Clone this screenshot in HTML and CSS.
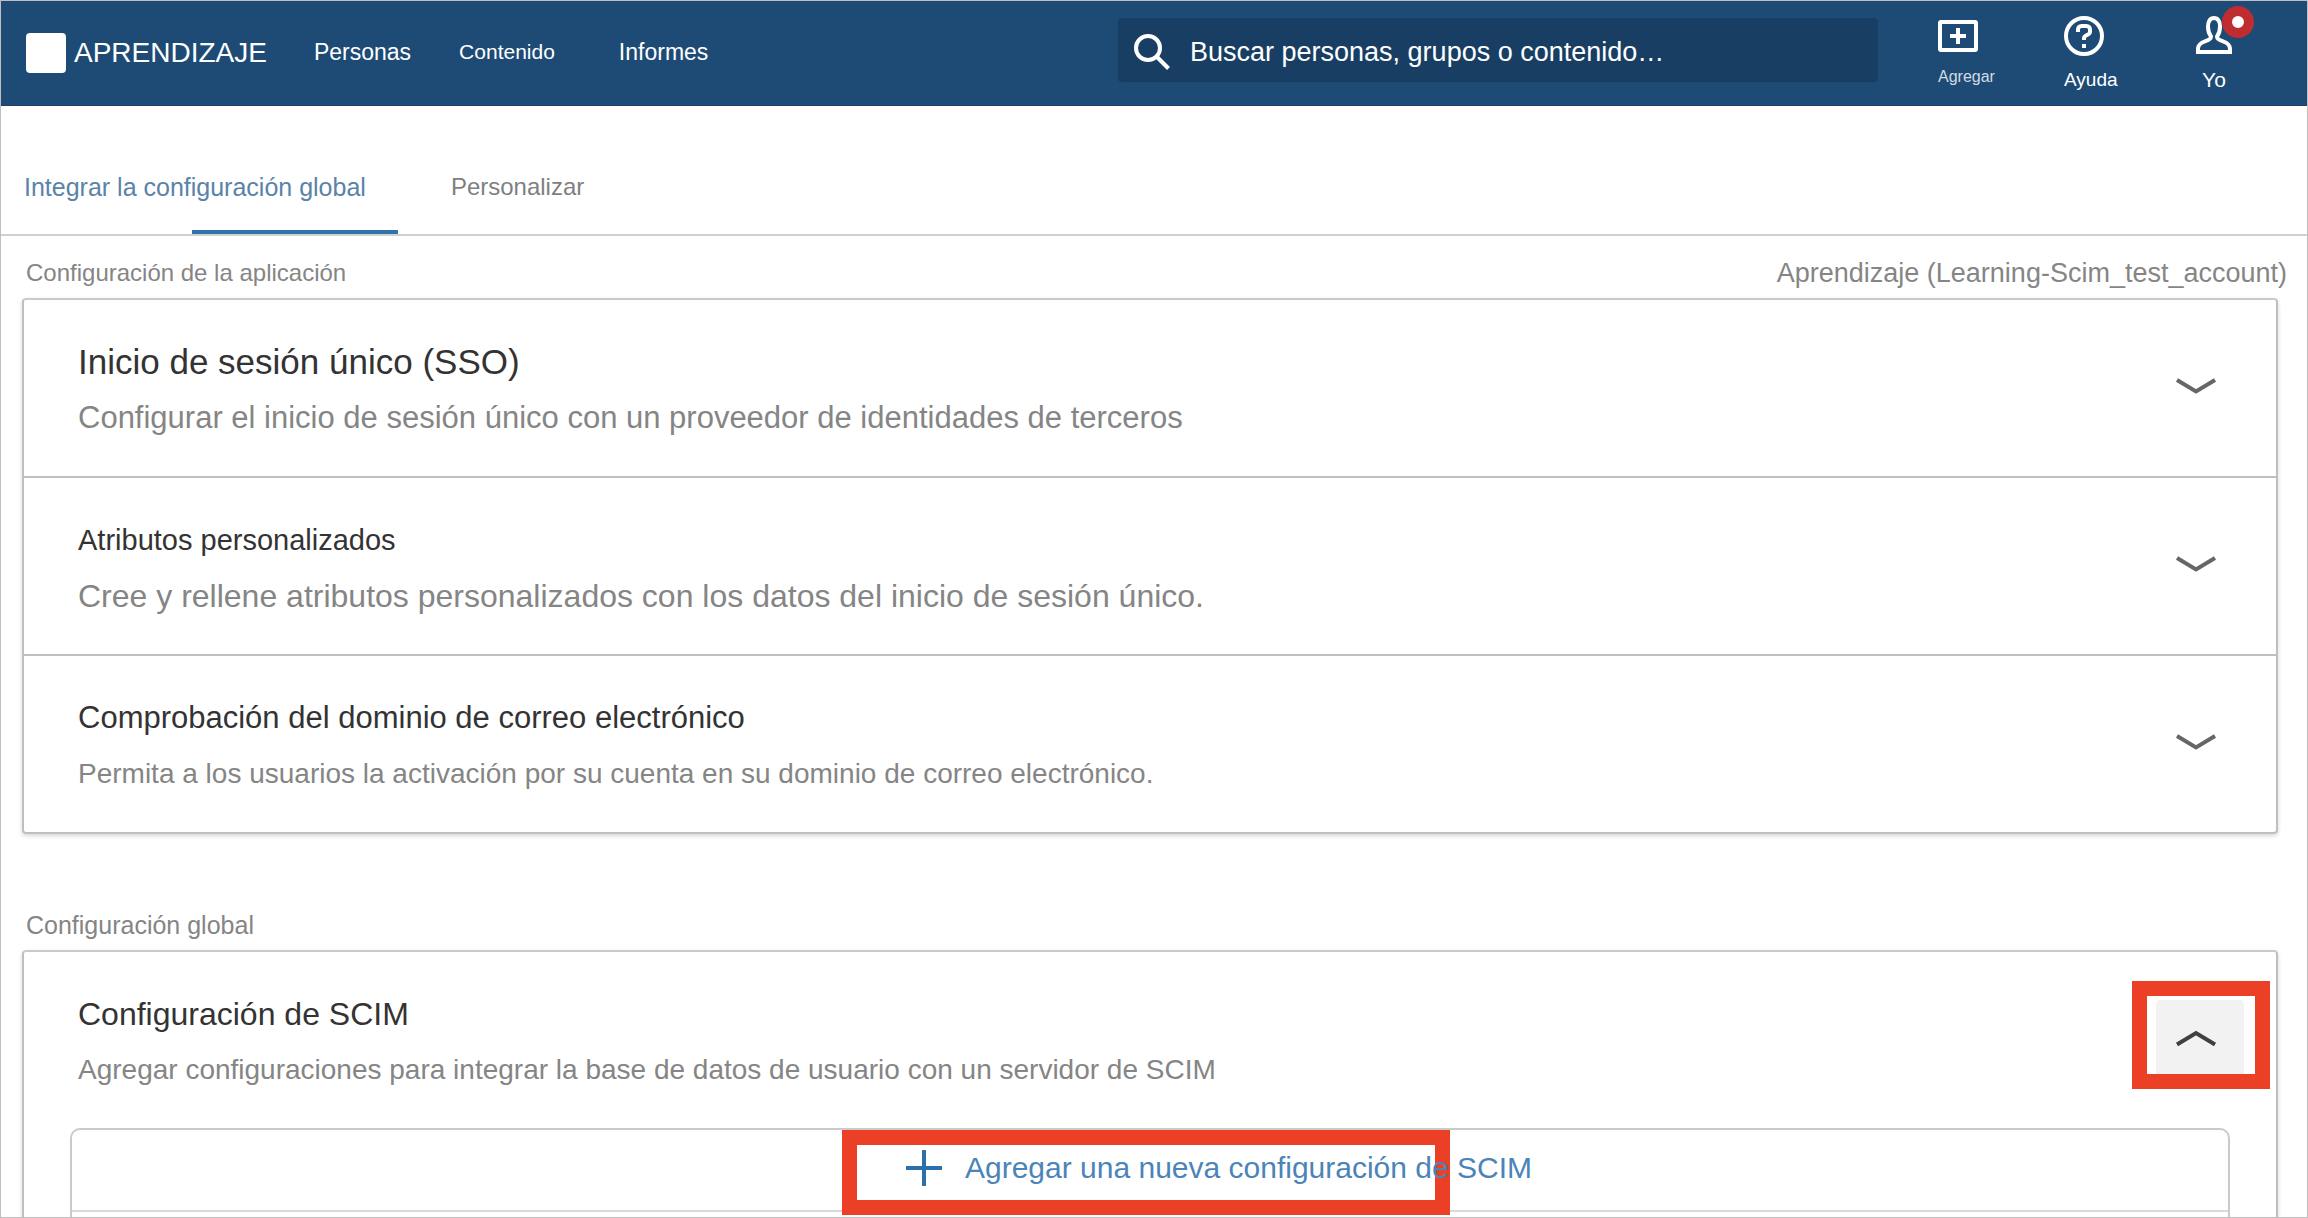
FILE: index.html
```html
<!DOCTYPE html>
<html lang="es">
<head>
<meta charset="utf-8">
<meta name="viewport" content="width=device-width, initial-scale=1">
<title>Aprendizaje - Integrar la configuración global</title>
<link rel="stylesheet" href="styles.css">
</head>
<body>
<div class="page">
  <header class="topbar">
    <a class="brand" href="#"><span class="brand-mark"></span>APRENDIZAJE</a>
    <nav class="main-nav" aria-label="Principal">
      <a class="nav-people" href="#">Personas</a>
      <a class="nav-content" href="#">Contenido</a>
      <a class="nav-reports" href="#">Informes</a>
    </nav>
    <form class="search" role="search">
      <svg class="search-icon" viewBox="0 0 36 36" aria-hidden="true"><circle cx="14" cy="14" r="12"/><path d="M22.500 22.500 34.500 34.500"/></svg>
      <input class="search-input" type="text" aria-label="Buscar" placeholder="Buscar personas, grupos o contenido…">
    </form>
    <div class="actions">
      <button class="action action-add" type="button">
        <svg class="action-icon" viewBox="0 0 40 40" aria-hidden="true"><rect x="2" y="6" width="36" height="28" rx="1"/><path d="M20 12v16M12 20h16"/></svg>
        <span>Agregar</span>
      </button>
      <button class="action action-help" type="button">
        <svg class="action-icon" viewBox="0 0 40 40" aria-hidden="true"><circle cx="20" cy="20" r="18"/><path d="M14 16v-2.500c0-2 1.500-3.500 3.500-3.500h5c2 0 3.500 1.500 3.500 3.500v2c0 1.500-.7 2.300-2 3l-2 1c-1.300.7-2 1.500-2 3V24"/><path d="M20 28v4"/></svg>
        <span>Ayuda</span>
      </button>
      <button class="action action-me" type="button">
        <svg class="action-icon" viewBox="0 0 36 40" aria-hidden="true"><path d="M15 20.500C13 18 12 14.500 12 10.500 12 5.500 14 2 18 2s6 3.500 6 8.500c0 4-1 7.500-3 10 0 2.500 2 3.500 5.500 4.700 5.500 1.900 7.500 3.800 7.500 7.800v3H2v-3c0-4 2-5.900 7.500-7.800C13 24 15 23 15 20.500z"/></svg>
        <span>Yo</span>
        <span class="badge"></span>
      </button>
    </div>
  </header>

  <nav class="tabs" aria-label="Configuración">
    <a class="tab tab-active" href="#" aria-current="page">Integrar la configuración global</a>
    <a class="tab" href="#">Personalizar</a>
  </nav>

  <main class="content">
    <section>
      <div class="section-head">
        <h2 class="section-label">Configuración de la aplicación</h2>
        <p class="account">Aprendizaje (Learning-Scim_test_account)</p>
      </div>
      <div class="card">
        <div class="row">
          <div class="row-text">
            <h3 class="title-xl">Inicio de sesión único (SSO)</h3>
            <p class="desc-md">Configurar el inicio de sesión único con un proveedor de identidades de terceros</p>
          </div>
          <button class="toggle" type="button" aria-label="Expandir inicio de sesión único" aria-expanded="false"><svg viewBox="0 0 88 80" aria-hidden="true"><path d="M21 32 40 43.500 59 32"/></svg></button>
        </div>
        <div class="row">
          <div class="row-text">
            <h3 class="title-sm">Atributos personalizados</h3>
            <p class="desc-lg">Cree y rellene atributos personalizados con los datos del inicio de sesión único.</p>
          </div>
          <button class="toggle" type="button" aria-label="Expandir atributos personalizados" aria-expanded="false"><svg viewBox="0 0 88 80" aria-hidden="true"><path d="M21 32 40 43.500 59 32"/></svg></button>
        </div>
        <div class="row">
          <div class="row-text">
            <h3 class="title-md">Comprobación del dominio de correo electrónico</h3>
            <p class="desc-sm">Permita a los usuarios la activación por su cuenta en su dominio de correo electrónico.</p>
          </div>
          <button class="toggle" type="button" aria-label="Expandir comprobación del dominio" aria-expanded="false"><svg viewBox="0 0 88 80" aria-hidden="true"><path d="M21 32 40 43.500 59 32"/></svg></button>
        </div>
      </div>
    </section>

    <section class="global">
      <div class="section-head">
        <h2 class="section-label section-label-lg">Configuración global</h2>
      </div>
      <div class="card card-open">
        <div class="row">
          <div class="row-text">
            <h3 class="title-lg">Configuración de SCIM</h3>
            <p class="desc-sm">Agregar configuraciones para integrar la base de datos de usuario con un servidor de SCIM</p>
          </div>
          <button class="toggle toggle-open" type="button" aria-label="Contraer configuración de SCIM" aria-expanded="true"><svg viewBox="0 0 88 80" aria-hidden="true"><path d="M21 44.500 40 33 59 44.500"/></svg></button>
        </div>
        <div class="scim-list">
          <div class="scim-add">
            <button class="add-button" type="button">
              <svg class="add-icon" viewBox="0 0 36 36" aria-hidden="true"><path d="M18 0v36M0 18h36"/></svg>
              <span>Agregar una nueva configuración de SCIM</span>
            </button>
          </div>
        </div>
      </div>
    </section>
  </main>
</div>
</body>
</html>
```
FILE: styles.css
```css
*,
*::before,
*::after {
  box-sizing: border-box;
}

body {
  margin: 0;
  background: #fff;
  font-family: "Liberation Sans", Arial, sans-serif;
  color: #333;
}

h2, h3, p {
  margin: 0;
  font-weight: 400;
}

a {
  text-decoration: none;
}

button {
  padding: 0;
  border: 0;
  background: none;
  font-family: inherit;
  cursor: pointer;
}

svg {
  display: block;
  fill: none;
  stroke: currentColor;
  stroke-width: 4px;
}

.page {
  display: flex;
  flex-direction: column;
  height: 100vh;
  overflow: hidden;
  border: 1px solid #bfbfbf;
}

/* Top bar */
.topbar {
  display: flex;
  flex: none;
  align-items: center;
  height: 105px;
  padding-left: 25px;
  background: #1d4b76;
  border-bottom: 1px solid #194268;
  color: #fff;
}

.brand {
  display: flex;
  align-items: center;
  gap: 8px;
  color: #fff;
  font-size: 28px;
  line-height: 40px;
}

.brand-mark {
  width: 40px;
  height: 40px;
  border-radius: 4px;
  background: #fff;
}

.main-nav {
  display: flex;
  align-items: center;
  padding-bottom: 3px;
  margin-left: 47px;
}

.main-nav a {
  color: #fff;
  font-size: 23px;
  line-height: 32px;
}

.main-nav .nav-content {
  margin: 0 64px 0 48px;
  font-size: 21px;
}

.search {
  display: flex;
  flex: 0 1 760px;
  align-items: center;
  height: 64px;
  margin: 0 60px 6px auto;
  padding-left: 16px;
  border-radius: 4px;
  background: #183f63;
}

.search-icon {
  flex: none;
  width: 36px;
  height: 36px;
  margin-bottom: -4px;
}

.search-input {
  flex: 1;
  min-width: 0;
  height: 64px;
  margin-left: 20px;
  padding: 4px 0 0;
  border: 0;
  outline: 0;
  background: none;
  color: #fff;
  font-family: inherit;
  font-size: 27px;
}

.search-input::placeholder {
  color: #fff;
  opacity: 1;
}

.actions {
  display: grid;
  grid-template-columns: 126px 132px auto;
  align-items: start;
  align-self: stretch;
  padding: 15px 75px 0 0;
}

.action {
  position: relative;
  display: flex;
  flex-direction: column;
  align-items: flex-start;
  gap: 12px;
  color: #fff;
  font-size: 19px;
  line-height: 24px;
}

.action-icon {
  width: 40px;
  height: 40px;
}

.action-add {
  gap: 9px;
  font-size: 16px;
}

.action-add span {
  color: #d2dbe4;
}

.action-me {
  align-items: center;
  font-size: 21px;
}

.action-me .action-icon {
  width: 36px;
}

.badge {
  position: absolute;
  top: -10px;
  left: 26px;
  width: 32px;
  height: 32px;
  border: 10px solid #c02d30;
  border-radius: 50%;
  background: #fff;
}

/* Tabs */
.tabs {
  display: flex;
  flex: none;
  gap: 53px;
  padding-left: 23px;
  border-bottom: 2px solid #cfcfd4;
}

.tab {
  padding: 65px 0 31px;
  color: #7f7f7f;
  font-size: 24px;
  line-height: 32px;
}

.tab-active {
  position: relative;
  padding-right: 32px;
  color: #5a83a8;
  font-size: 25px;
}

.tab-active::after {
  content: "";
  position: absolute;
  right: 0;
  bottom: 0;
  width: 206px;
  height: 4px;
  background: #2f72ad;
}

/* Sections */
.content {
  display: flex;
  flex: 1;
  flex-direction: column;
  gap: 54px;
}

.section-head {
  display: flex;
  justify-content: space-between;
  padding: 21px 20px 9px 25px;
  color: #858585;
  line-height: 32px;
}

.section-label {
  font-size: 24px;
}

.section-label-lg {
  font-size: 25px;
}

.account {
  font-size: 27px;
}

.card {
  margin: 0 29px 0 21px;
  border: 2px solid #bfbfbf;
  border-top-color: #cacaca;
  border-radius: 4px;
  box-shadow: 0 2px 4px rgba(0, 0, 0, 0.16);
}

.row {
  display: flex;
  align-items: flex-start;
  justify-content: space-between;
  padding: 42px 32px 38px 54px;
}

.row + .row {
  border-top: 2px solid #bfbfbf;
}

.row-text {
  display: flex;
  flex-direction: column;
  gap: 16px;
  line-height: 40px;
}

.row-text p {
  color: #858585;
}

.title-xl {
  font-size: 35px;
}

.title-lg,
.desc-lg {
  font-size: 32px;
}

.title-md,
.desc-md {
  font-size: 31px;
}

.title-sm {
  font-size: 29px;
}

.desc-sm {
  font-size: 28px;
}

.toggle {
  position: relative;
  flex: none;
  width: 88px;
  height: 80px;
  margin-top: 6px;
  color: #666;
}

.toggle-open {
  border-radius: 4px;
  background: #f2f2f2;
  color: #404040;
}

/* Red frames that call out the two controls */
.toggle-open::after,
.add-button::before {
  content: "";
  position: absolute;
  border: 15px solid #eb4026;
}

.toggle-open::after {
  top: -19px;
  left: -24px;
  width: 138px;
  height: 108px;
}

/* SCIM list */
.global {
  display: flex;
  flex: 1;
  flex-direction: column;
}

.card-open {
  display: flex;
  flex: 1;
  flex-direction: column;
  border-bottom: 0;
  border-radius: 4px 4px 0 0;
}

.scim-list {
  flex: 1;
  margin: 0 46px;
  border: 2px solid #cacaca;
  border-bottom: 0;
  border-radius: 10px 10px 0 0;
}

.scim-add {
  display: flex;
  justify-content: center;
  border-bottom: 2px solid #d9d9d9;
}

.add-button {
  position: relative;
  display: flex;
  align-items: center;
  gap: 23px;
  width: 608px;
  height: 80px;
  padding: 0 0 4px 60px;
  color: #4a84b8;
  font-size: 30px;
  white-space: nowrap;
}

.add-button::before {
  top: 0;
  left: -4px;
  width: 608px;
  height: 85px;
}

.add-button span {
  position: relative;
}

.add-icon {
  flex: none;
  width: 36px;
  height: 36px;
  color: #2c6fad;
}
```
